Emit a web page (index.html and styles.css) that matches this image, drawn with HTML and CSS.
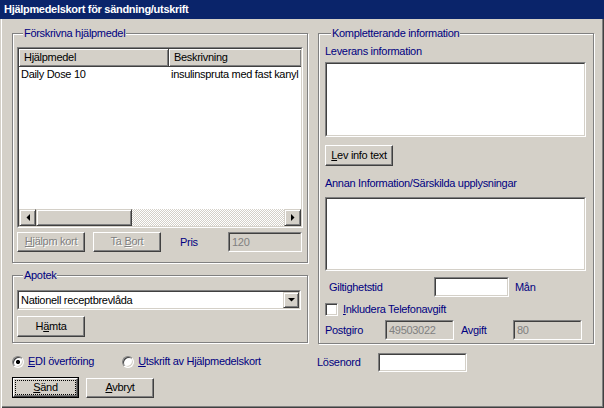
FILE: index.html
```html
<!DOCTYPE html>
<html lang="sv">
<head>
<meta charset="utf-8">
<title>Hjälpmedelskort för sändning/utskrift</title>
<link rel="stylesheet" href="styles.css">
</head>
<body>
<div class="window">
  <div class="titlebar">Hjälpmedelskort för sändning/utskrift</div>
  <div class="main">
    <div class="col">
      <div class="group g-presc">
        <div class="legend">Förskrivna hjälpmedel</div>
        <div class="sunken listview">
          <div class="sunken-in lv-in">
            <div class="lv-head">
              <div class="hcell c1">Hjälpmedel</div>
              <div class="hcell c2">Beskrivning</div>
            </div>
            <div class="lv-row">
              <div class="cell c1">Daily Dose 10</div>
              <div class="cell c2">insulinspruta med fast kanyl</div>
            </div>
            <div class="hscroll">
              <div class="sb-btn"><svg width="4" height="7" viewBox="0 0 4 7"><path d="M4 0V7L0.5 3.5Z" fill="#000"/></svg></div>
              <div class="sb-thumb"></div>
              <div class="sb-track"></div>
              <div class="sb-btn"><svg width="4" height="7" viewBox="0 0 4 7"><path d="M0 0V7L3.5 3.5Z" fill="#000"/></svg></div>
            </div>
          </div>
        </div>
        <div class="row presc-actions">
          <div class="btn disabled"><span><u>H</u>jälpm kort</span></div>
          <div class="btn disabled"><span>Ta <u>B</u>ort</span></div>
          <div class="lbl pris">Pris</div>
          <div class="sunken field dis w-pris"><div class="sunken-in fin">120</div></div>
        </div>
      </div>

      <div class="group g-apotek">
        <div class="legend">Apotek</div>
        <div class="sunken combo">
          <div class="sunken-in combo-in">
            <div class="combo-text">Nationell receptbrevlåda</div>
            <div class="sb-btn dd"><svg width="7" height="4" viewBox="0 0 7 4"><path d="M0 0H7L3.5 3.5Z" fill="#000"/></svg></div>
          </div>
        </div>
        <div class="btn w-hamta"><span>H<u>ä</u>mta</span></div>
      </div>

      <div class="row radios">
        <div class="radio-item"><span class="radio on"></span><span class="lbl"><u>E</u>DI överföring</span></div>
        <div class="radio-item r2"><span class="radio"></span><span class="lbl"><u>U</u>tskrift av Hjälpmedelskort</span></div>
      </div>

      <div class="row actions">
        <div class="btn default"><div class="btn-in"><span class="focus"><u>S</u>änd</span></div></div>
        <div class="btn"><span><u>A</u>vbryt</span></div>
      </div>
    </div>

    <div class="col">
      <div class="group g-info">
        <div class="legend">Kompletterande information</div>
        <div class="lbl sub l-lev">Leverans information</div>
        <div class="sunken area a1"><div class="sunken-in area-in"></div></div>
        <div class="btn w-lev"><span><u>L</u>ev info text</span></div>
        <div class="lbl sub l-annan">Annan Information/Särskilda upplysningar</div>
        <div class="sunken area a2"><div class="sunken-in area-in"></div></div>
        <div class="row r-gilt">
          <div class="lbl gilt">Giltighetstid</div>
          <div class="sunken field w-gilt"><div class="sunken-in fin white"></div></div>
          <div class="lbl man">Mån</div>
        </div>
        <div class="row r-check">
          <span class="check"></span>
          <span class="lbl"><u>I</u>nkludera Telefonavgift</span>
        </div>
        <div class="row r-post">
          <div class="lbl post">Postgiro</div>
          <div class="sunken field dis w-post"><div class="sunken-in fin">49503022</div></div>
          <div class="lbl avg">Avgift</div>
          <div class="sunken field dis w-avg"><div class="sunken-in fin">80</div></div>
        </div>
      </div>
      <div class="row r-losen">
        <div class="lbl losen">Lösenord</div>
        <div class="sunken field w-losen"><div class="sunken-in fin white"></div></div>
      </div>
    </div>
  </div>
</div>
</body>
</html>
```

FILE: styles.css
```css
* { box-sizing: border-box; }
html, body { margin: 0; padding: 0; }
body {
  width: 604px;
  height: 408px;
  overflow: hidden;
  background: #d4d0c8;
  font-family: "Liberation Sans", Arial, sans-serif;
  font-size: 11px;
  letter-spacing: -0.3px;
  color: #000;
}
.window {
  width: 604px;
  height: 408px;
  background: #d4d0c8;
  box-shadow: inset 1px 0 #d4d0c8, inset 2px 0 #fff, inset -1px -1px #404040, inset -2px -2px #808080;
  display: flex;
  flex-direction: column;
}
.titlebar {
  height: 19px;
  background: #0a246a;
  color: #fff;
  font-weight: bold;
  font-size: 11px;
  letter-spacing: -0.3px;
  line-height: 19px;
  padding-left: 4px;
}
.main {
  display: grid;
  grid-template-columns: 296px 276px;
  column-gap: 10px;
  padding: 14px 0 0 12px;
  align-items: start;
}
.col { display: flex; flex-direction: column; }
.row { display: flex; align-items: center; }

.group {
  border: 1px solid #808080;
  box-shadow: inset 1px 1px #fff, 1px 1px #fff;
  display: flex;
  flex-direction: column;
  align-items: flex-start;
}
.legend {
  margin: -7px 0 0 6px;
  padding: 0 1px;
  background: #d4d0c8;
  line-height: 13px;
  height: 13px;
  color: #000080;
  white-space: nowrap;
}
.lbl { color: #000080; white-space: nowrap; line-height: 13px; }

/* sunken 2px border */
.sunken {
  border: 1px solid;
  border-color: #808080 #fff #fff #808080;
}
.sunken-in {
  border: 1px solid;
  border-color: #404040 #d4d0c8 #d4d0c8 #404040;
  height: 100%;
}

/* left group */
.g-presc { height: 230px; padding: 0 4px 0 4px; }
.listview { margin-top: 7px; width: 286px; height: 181px; }
.lv-in { background: #fff; display: flex; flex-direction: column; }
.lv-head { display: flex; height: 18px; flex: none; }
.hcell {
  height: 18px;
  line-height: 16px;
  padding-left: 5px;
  border-right: 1px solid #404040;
  border-bottom: 1px solid #404040;
  box-shadow: inset 1px 1px #fff, inset -1px -1px #808080;
  background: #d4d0c8;
  white-space: nowrap;
}
.hcell.c1 { width: 150px; }
.hcell.c2 { flex: 1; border-right: none; }
.lv-row { display: flex; height: 14px; line-height: 14px; }
.cell { white-space: nowrap; overflow: hidden; padding-left: 2px; }
.cell.c1 { width: 150px; }
.cell.c2 { flex: 1; }

.hscroll { margin-top: auto; height: 17px; display: flex; flex: none; }
.sb-btn {
  width: 17px;
  height: 17px;
  flex: none;
  background: #d4d0c8;
  border: 1px solid;
  border-color: #d4d0c8 #404040 #404040 #d4d0c8;
  box-shadow: inset 1px 1px #fff, inset -1px -1px #808080;
  display: flex;
  align-items: center;
  justify-content: center;
}
.sb-thumb {
  width: 96px;
  height: 17px;
  flex: none;
  background: #d4d0c8;
  border: 1px solid;
  border-color: #d4d0c8 #404040 #404040 #d4d0c8;
  box-shadow: inset 1px 1px #fff, inset -1px -1px #808080;
}
.sb-track {
  flex: 1;
  background: repeating-conic-gradient(#fff 0 25%, #d4d0c8 0 50%) 0 0 / 2px 2px;
}

.presc-actions { margin-top: 4px; width: 286px; }
.btn {
  width: 68px;
  height: 20px;
  background: #d4d0c8;
  border: 1px solid;
  border-color: #fff #404040 #404040 #fff;
  box-shadow: inset -1px -1px #808080;
  display: flex;
  align-items: center;
  justify-content: center;
  white-space: nowrap;
  line-height: 13px;
  padding-bottom: 1px;
}
.btn + .btn { margin-left: 8px; }
.btn.disabled { color: #808080; text-shadow: 1px 1px #fff; }
.pris { margin-left: 19px; }
.field { height: 20px; }
.fin { line-height: 16px; padding-left: 2px; white-space: nowrap; }
.dis .fin { background: #d4d0c8; color: #808080; }
.fin.white { background: #fff; }
.w-pris { width: 74px; margin-left: auto; margin-right: 1px; }

/* apotek */
.g-apotek { margin-top: 12px; height: 68px; padding: 0 4px; }
.combo { margin-top: 8px; width: 284px; height: 20px; }
.combo-in { background: #fff; display: flex; align-items: center; }
.combo-text { flex: 1; padding-left: 2px; line-height: 16px; }
.dd { width: 16px; height: 16px; }
.w-hamta { margin-top: 6px; height: 21px; }

/* radios */
.radios { margin-top: 12px; height: 13px; }
.radio-item { display: flex; align-items: center; }
.radio-item.r2 { margin-left: 28px; }
.radio {
  width: 12px;
  height: 12px;
  border-radius: 50%;
  border: 1px solid;
  border-color: #808080 #fff #fff #808080;
  box-shadow: inset 1px 1px #404040, inset -1px -1px #d4d0c8;
  background: #fff;
  margin-right: 4px;
  flex: none;
}
.radio.on { background: radial-gradient(circle at 50% 50%, #000 0 2px, #fff 2.2px); }

.actions { margin-top: 9px; }
.btn.default {
  width: 67px;
  height: 21px;
  border: 1px solid #000;
  box-shadow: none;
  padding: 0;
}
.btn-in {
  width: 100%;
  height: 100%;
  border: 1px solid;
  border-color: #fff #404040 #404040 #fff;
  box-shadow: inset -1px -1px #808080;
  display: flex;
  align-items: center;
  justify-content: center;
  padding: 2px;
}
.focus {
  display: flex;
  align-items: center;
  justify-content: center;
  width: 100%;
  height: 100%;
  outline: 1px dotted #000;
  outline-offset: 0;
}
.actions .btn + .btn { margin-left: 7px; }

/* right group */
.g-info { height: 311px; padding: 0 6px; }
.sub { margin-top: 5px; }
.area { width: 261px; }
.area-in { background: #fff; }
.a1 { margin-top: 4px; height: 75px; }
.w-lev { margin-top: 8px; height: 21px; }
.l-annan { margin-top: 11px; }
.a2 { margin-top: 7px; height: 74px; }
.r-gilt { margin-top: 6px; }
.gilt { margin-left: 4px; width: 105px; }
.w-gilt { width: 75px; }
.man { margin-left: 6px; }
.r-check { margin-top: 6px; }
.check {
  width: 13px;
  height: 13px;
  border: 1px solid;
  border-color: #808080 #fff #fff #808080;
  box-shadow: inset 1px 1px #404040, inset -1px -1px #d4d0c8;
  background: #fff;
  margin-right: 5px;
  flex: none;
}
.r-post { margin-top: 4px; }
.post { width: 60px; }
.w-post { width: 69px; }
.avg { margin-left: 7px; width: 52px; }
.w-avg { width: 69px; }

.r-losen { margin-top: 9px; }
.losen { width: 61px; margin-left: -1px; }
.w-losen { width: 89px; height: 19px; }
```
